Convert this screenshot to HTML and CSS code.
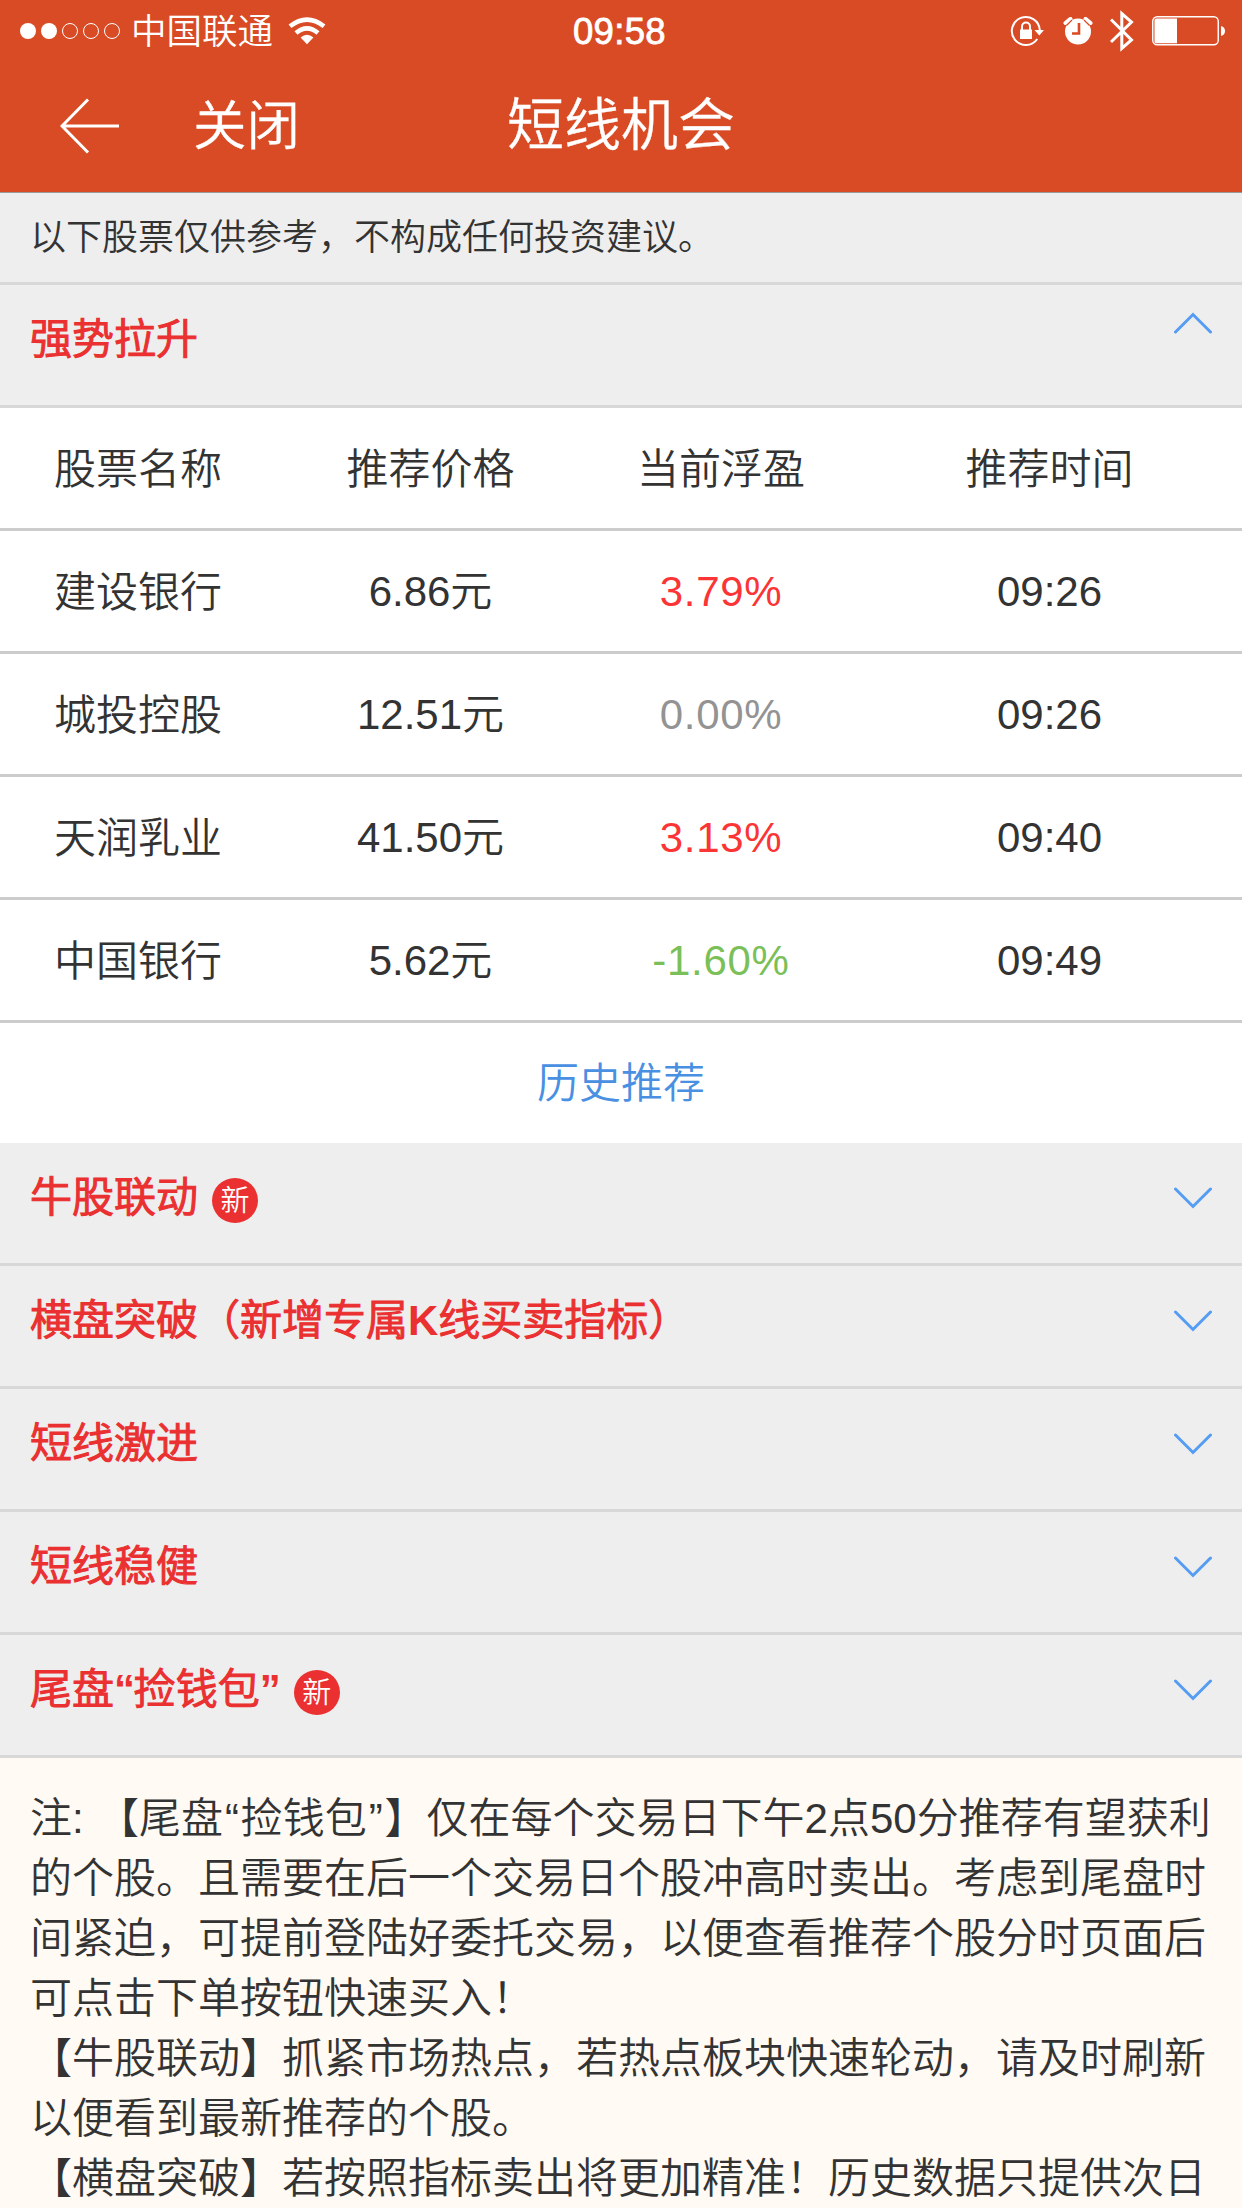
FILE: index.html
```html
<!DOCTYPE html>
<html lang="zh-CN">
<head>
<meta charset="utf-8">
<title>短线机会</title>
<link rel="stylesheet" href="styles.css">
</head>
<body>
<header class="top">
  <div class="status">
    <svg class="signal" width="102" height="18" viewBox="0 0 102 18" fill="none" stroke="#fff">
      <circle cx="9" cy="9" r="8" fill="#fff" stroke="none"/><circle cx="30" cy="9" r="8" fill="#fff" stroke="none"/>
      <circle cx="51" cy="9" r="7.5"/><circle cx="72" cy="9" r="7.5"/><circle cx="93" cy="9" r="7.5"/>
    </svg>
    <span class="carrier">中国联通</span>
    <svg class="wifi" width="38" height="28" viewBox="0 0 38 28" fill="none" stroke="#fff" stroke-width="4.6">
      <path d="M2 9.2Q19 -4 36 9.2M8 16Q19 6.800 30 16"/>
      <path d="M19 27.300 12.600 20.500Q19 15.200 25.400 20.500Z" fill="#fff" stroke="none"/>
    </svg>
    <span class="clock">09:58</span>
    <div class="indicators">
      <svg width="36" height="32" viewBox="0 0 36 32" fill="none" stroke="#fff" stroke-width="2">
        <path d="M27.300 24A14 14 0 1 1 29.800 15"/>
        <path d="M24.500 15h9.500l-4.700 5.500z" fill="#fff" stroke="none"/>
        <path d="M10 14.500h12V24H10z" fill="#fff" stroke="none"/>
        <path d="M12 15v-3.500a4 4 0 0 1 8 0V15"/>
      </svg>
      <svg width="30" height="28" viewBox="0 0 30 28">
        <circle cx="15" cy="14.500" r="13" fill="#fff"/>
        <path d="M16 6v10.500H9" fill="none" stroke="#d94b25" stroke-width="2.600"/>
        <path d="M2.500 6 7.500 1.900M27.500 6 22.500 1.900" stroke="#fff" stroke-width="4" stroke-linecap="round"/>
        <path d="M3.500 8.500 9 3M26.500 8.500 21 3" stroke="#d94b25" stroke-width="1.200"/>
      </svg>
      <svg width="24" height="42" viewBox="0 0 24 42" fill="none" stroke="#fff" stroke-width="3">
        <path d="M1 9.500 21.500 30 11.800 38.500V3.500L21.500 12 1 32"/>
      </svg>
      <svg width="74" height="30" viewBox="0 0 74 30">
        <rect x=".75" y=".75" width="65.500" height="28" rx="4.500" fill="none" stroke="#fff" stroke-width="1.400"/>
        <path d="M4 2.500H25V27.300H4Q2.500 27.300 2.500 25.800V4Q2.500 2.500 4 2.500Z" fill="#fff"/>
        <path d="M69 10Q73 11 73 15T69 20Z" fill="#fff"/>
      </svg>
    </div>
  </div>
  <nav class="nav">
    <svg class="back" width="60" height="56" viewBox="0 0 60 56" fill="none" stroke="#fff" stroke-width="3">
      <path d="M28 1.500 2 28 28 54.500M2 28H59"/>
    </svg>
    <span class="close">关闭</span>
    <h1 class="title">短线机会</h1>
  </nav>
</header>
<p class="notice">以下股票仅供参考，不构成任何投资建议。</p>
<section class="group">
  <h2>强势拉升</h2>
  <svg class="chevron up" viewBox="0 0 38 22"><path d="M1.500 2 19 19.500 36.500 2"/></svg>
</section>
<div class="table">
  <div class="row head"><span>股票名称</span><span>推荐价格</span><span>当前浮盈</span><span>推荐时间</span></div>
  <div class="row"><span class="name">建设银行</span><span>6.86元</span><span class="gain">3.79%</span><span>09:26</span></div>
  <div class="row"><span class="name">城投控股</span><span>12.51元</span><span class="flat">0.00%</span><span>09:26</span></div>
  <div class="row"><span class="name">天润乳业</span><span>41.50元</span><span class="gain">3.13%</span><span>09:40</span></div>
  <div class="row"><span class="name">中国银行</span><span>5.62元</span><span class="loss">-1.60%</span><span>09:49</span></div>
  <a class="history">历史推荐</a>
</div>
<section class="group">
  <h2>牛股联动</h2><span class="badge">新</span>
  <svg class="chevron" viewBox="0 0 38 22"><path d="M1.500 2 19 19.500 36.500 2"/></svg>
</section>
<section class="group">
  <h2>横盘突破（新增专属<b>K</b>线买卖指标）</h2>
  <svg class="chevron" viewBox="0 0 38 22"><path d="M1.500 2 19 19.500 36.500 2"/></svg>
</section>
<section class="group">
  <h2>短线激进</h2>
  <svg class="chevron" viewBox="0 0 38 22"><path d="M1.500 2 19 19.500 36.500 2"/></svg>
</section>
<section class="group">
  <h2>短线稳健</h2>
  <svg class="chevron" viewBox="0 0 38 22"><path d="M1.500 2 19 19.500 36.500 2"/></svg>
</section>
<section class="group">
  <h2 class="quoted">尾盘<b>“</b>捡钱包<b>”</b></h2><span class="badge">新</span>
  <svg class="chevron" viewBox="0 0 38 22"><path d="M1.500 2 19 19.500 36.500 2"/></svg>
</section>
<section class="notes">
  <p>注<span class="colon">: </span>【尾盘<q class="open">“</q>捡钱包<q>”</q>】仅在每个交易日下午2点50分推荐有望获利<br>的个股。且需要在后一个交易日个股冲高时卖出。考虑到尾盘时<br>间紧迫，可提前登陆好委托交易，以便查看推荐个股分时页面后<br>可点击下单按钮快速买入！</p>
  <p>【牛股联动】抓紧市场热点，若热点板块快速轮动，请及时刷新<br>以便看到最新推荐的个股。</p>
  <p>【横盘突破】若按照指标卖出将更加精准！历史数据只提供次日</p>
</section>
</body>
</html>
```
FILE: styles.css
```css
* { box-sizing: border-box; margin: 0; padding: 0; }
body {
  width: 1242px; height: 2208px; overflow: hidden;
  background: #fffaf3; color: #333;
  font: 350 42px/60px "Liberation Sans", "Noto Sans CJK SC DemiLight", "Noto Sans CJK SC", sans-serif;
  text-spacing-trim: space-all;
  white-space: nowrap;
}
svg { display: block; flex: none; }
.top { height: 193px; background: #d94b25; color: #fff; border-bottom: 1px solid #999; }
.status {
  height: 60px; padding: 0 16px 0 19px;
  display: grid; grid-template-columns: 102px 146px 38px 1fr auto; align-items: center;
}
.carrier { font-size: 35.5px; padding-left: 10px; padding-top: 2px; }
.wifi { margin-left: 21px; }
.clock { padding-left: 268px; font-size: 36.500px; letter-spacing: .3px; -webkit-text-stroke: .8px #fff; padding-top: 2px; }
.indicators { display: flex; align-items: center; }
.indicators svg:nth-child(2) { margin-left: 17px; }
.indicators svg:nth-child(3) { margin-left: 17px; }
.indicators svg:nth-child(4) { margin-left: 18px; }
.nav { height: 132px; display: flex; align-items: center; padding-left: 60px; }
.close { font-size: 53.5px; font-weight: 300; margin-left: 73px; padding-top: 1px; -webkit-text-stroke: .3px #fff; }
.title { font-size: 57px; font-weight: 300; margin-left: 207px; padding-bottom: 2px; -webkit-text-stroke: .3px #fff; }
.notice {
  height: 92px; padding-left: 30px; background: #eee; border-bottom: 3px solid #d8d8d8;
  font-size: 36px; line-height: 90px;
}
.group {
  height: 123px; padding: 25px 30px 0; display: flex; align-items: flex-start;
  background: #eee; border-bottom: 3px solid #d8d8d8; color: #ea3030;
}
.group h2 { font-size: 42px; font-weight: 400; line-height: 60px; -webkit-text-stroke: 1.1px #ea3030; }
.group b { font-weight: 700; -webkit-text-stroke: 0; }
.quoted b { letter-spacing: -1.2px; }
.badge {
  width: 46px; height: 45px; margin: 10px 0 0 14px; border-radius: 50%;
  background: #ea3030; color: #fff; font-size: 29px; line-height: 46px; text-align: center;
}
.chevron {
  width: 38px; height: 22px; margin: 19px 0 0 auto;
  fill: none; stroke: #559cf3; stroke-width: 3; stroke-linecap: round;
}
.up { transform: scaleY(-1); margin-top: 2px; }
.table { background: #fff; }
.row {
  height: 123px; border-bottom: 3px solid #ccc; line-height: 122px; text-align: center;
  display: grid; grid-template-columns: 276px 309px 272px 385px;
}
.head, .name { line-height: 124px; }
.gain, .flat, .loss { letter-spacing: .7px; }
.gain { color: #fb3535; }
.flat { color: #939393; }
.loss { color: #7bbf59; }
.history { display: block; height: 120px; line-height: 122px; text-align: center; color: #4a90e2; }
.notes { padding: 31px 30px 0; }
.notes q { quotes: none; padding: 0 1.9px; }
.colon { letter-spacing: .8px; }
```
